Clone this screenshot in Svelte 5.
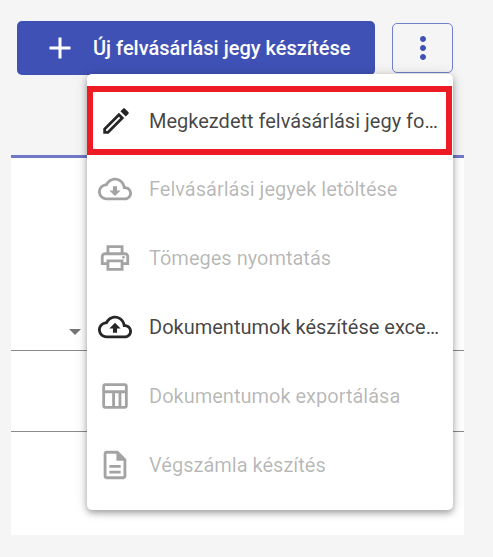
<script>
  const items = [
    { label: 'Megkezdett felvásárlási jegy folytatása', icon: 'edit', active: true, marked: true },
    { label: 'Felvásárlási jegyek letöltése', icon: 'download' },
    { label: 'Tömeges nyomtatás', icon: 'print' },
    { label: 'Dokumentumok készítése excelből', icon: 'upload', active: true },
    { label: 'Dokumentumok exportálása', icon: 'table' },
    { label: 'Végszámla készítés', icon: 'doc' }
  ];

  const icons = {
    edit: 'M3 17.25V21h3.75L17.81 9.94l-3.75-3.75L3 17.25zM5.92 19H5v-.92l9.06-9.06.92.92L5.92 19zM20.71 5.63l-2.34-2.34c-.2-.2-.45-.29-.71-.29s-.51.1-.7.29l-1.83 1.83 3.75 3.75 1.83-1.83c.39-.39.39-1.02 0-1.41z',
    download: 'M19.35 10.04C18.67 6.59 15.64 4 12 4 9.11 4 6.6 5.64 5.35 8.04 2.34 8.36 0 10.91 0 14c0 3.31 2.69 6 6 6h13c2.76 0 5-2.24 5-5 0-2.64-2.05-4.78-4.65-4.96zM19 18H6c-2.21 0-4-1.79-4-4 0-2.05 1.53-3.76 3.56-3.97l1.07-.11.5-.95C8.08 7.14 9.94 6 12 6c2.62 0 4.88 1.86 5.39 4.43l.3 1.5 1.53.11c1.56.1 2.78 1.41 2.78 2.96 0 1.65-1.35 3-3 3zm-5.55-8h-2.9v3H8l4 4 4-4h-2.55z',
    upload: 'M19.35 10.04C18.67 6.59 15.64 4 12 4 9.11 4 6.6 5.64 5.35 8.04 2.34 8.36 0 10.91 0 14c0 3.31 2.69 6 6 6h13c2.76 0 5-2.24 5-5 0-2.64-2.05-4.78-4.65-4.96zM19 18H6c-2.21 0-4-1.79-4-4 0-2.05 1.53-3.76 3.56-3.97l1.07-.11.5-.95C8.08 7.14 9.94 6 12 6c2.62 0 4.88 1.86 5.39 4.43l.3 1.5 1.53.11c1.56.1 2.78 1.41 2.78 2.96 0 1.65-1.35 3-3 3zM8 13h2.55v3h2.9v-3H16l-4-4z',
    print: 'M19 8h-1V3H6v5H5c-1.66 0-3 1.34-3 3v6h4v4h12v-4h4v-6c0-1.66-1.34-3-3-3zM8 5h8v3H8V5zm8 12v2H8v-4h8v2zm2-2v-2H6v2H4v-4c0-.55.45-1 1-1h14c.55 0 1 .45 1 1v4h-2z M18 12.5a1 1 0 1 0 0-2 1 1 0 0 0 0 2z',
    table: 'M19 3H5c-1.1 0-2 .9-2 2v14c0 1.1.9 2 2 2h14c1.1 0 2-.9 2-2V5c0-1.1-.9-2-2-2zm0 2v3H5V5h14zm-9 14H5v-9h5v9zm2 0v-9h2.5v9H12zm4.5 0v-9H19v9h-2.5z',
    doc: 'M8 16h8v2H8zm0-4h8v2H8zm6-10H6c-1.1 0-2 .9-2 2v16c0 1.1.89 2 1.99 2H18c1.1 0 2-.9 2-2V8l-6-6zm4 18H6V4h7v5h5v11z'
  };
</script>

<div class="page">
  <div class="toolbar">
    <button class="create">
      <svg class="plus" viewBox="0 0 24 24"><path d="M19 13h-6v6h-2v-6H5v-2h6V5h2v6h6v2z" /></svg>
      <span>Új felvásárlási jegy készítése</span>
    </button>
    <button class="more" aria-label="Több">
      <svg viewBox="0 0 24 24"><path d="M12 8c1.1 0 2-.9 2-2s-.9-2-2-2-2 .9-2 2 .9 2 2 2zm0 2c-1.1 0-2 .9-2 2s.9 2 2 2 2-.9 2-2-.9-2-2-2zm0 6c-1.1 0-2 .9-2 2s.9 2 2 2 2-.9 2-2-.9-2-2-2z" /></svg>
    </button>
  </div>

  <div class="panel">
    <div class="field first"><span class="arrow"></span></div>
    <div class="field second"></div>
  </div>

  <div class="menu">
    {#each items as item}
      <div class="item" class:active={item.active} class:marked={item.marked}>
        <svg viewBox="0 0 24 24"><path d={icons[item.icon]} /></svg>
        <span class="label">{item.label}</span>
      </div>
    {/each}
  </div>
</div>

<style>
  :global(body) {
    margin: 0;
    background: #f5f5f5;
    font-family: Roboto, "Liberation Sans", sans-serif;
  }
  .page {
    position: relative;
    width: 493px;
    height: 557px;
    overflow: hidden;
    box-sizing: border-box;
    padding-top: 21px;
  }
  .toolbar {
    display: flex;
    align-items: center;
    margin-left: 17px;
    gap: 17px;
  }
  button {
    box-sizing: border-box;
    font-family: inherit;
    padding: 0;
    cursor: pointer;
  }
  .create {
    display: flex;
    align-items: center;
    width: 358px;
    height: 54px;
    background: #3f51b5;
    border: none;
    border-radius: 5px;
    color: #fff;
    font-size: 20px;
    font-weight: 500;
    padding-left: 25px;
    gap: 15px;
  }
  .plus {
    width: 36px;
    height: 36px;
    fill: #fff;
  }
  .more {
    display: flex;
    align-items: center;
    justify-content: center;
    width: 61px;
    height: 50px;
    background: transparent;
    border: 1px solid #7280cc;
    border-radius: 5px;
  }
  .more svg {
    width: 36px;
    height: 36px;
    fill: #3f51b5;
  }
  .panel {
    margin: 80px 29px 0 11px;
    height: 377px;
    background: #fff;
    border-top: 3px solid #6f79c8;
  }
  .field {
    position: relative;
    border-bottom: 1px solid #8a8a8a;
  }
  .first {
    height: 192px;
  }
  .second {
    height: 80px;
  }
  .arrow {
    position: absolute;
    left: 58px;
    bottom: 15px;
    border-left: 6px solid transparent;
    border-right: 6px solid transparent;
    border-top: 6px solid #757575;
  }
  .menu {
    position: absolute;
    left: 87px;
    top: 74px;
    width: 366px;
    height: 436px;
    box-sizing: border-box;
    padding-top: 12px;
    background: #fff;
    border-radius: 5px;
    box-shadow: 0 3px 6px rgba(0, 0, 0, 0.3), 0 1px 14px rgba(0, 0, 0, 0.14);
  }
  .item {
    box-sizing: border-box;
    display: flex;
    align-items: center;
    height: 69px;
    padding-left: 11px;
    color: rgba(0, 0, 0, 0.29);
    font-size: 20px;
    gap: 17px;
  }
  .item svg {
    width: 34px;
    height: 34px;
    flex: none;
    fill: rgba(0, 0, 0, 0.36);
  }
  .item.active {
    color: rgba(0, 0, 0, 0.74);
  }
  .item.active svg {
    fill: rgba(0, 0, 0, 0.85);
  }
  .marked {
    width: 365px;
    border: 6px solid #ed1c24;
    padding-left: 6px;
    gap: 16px;
    margin-bottom: -1px;
  }
  .label {
    width: 292px;
    white-space: nowrap;
    overflow: hidden;
    text-overflow: ellipsis;
  }
</style>
